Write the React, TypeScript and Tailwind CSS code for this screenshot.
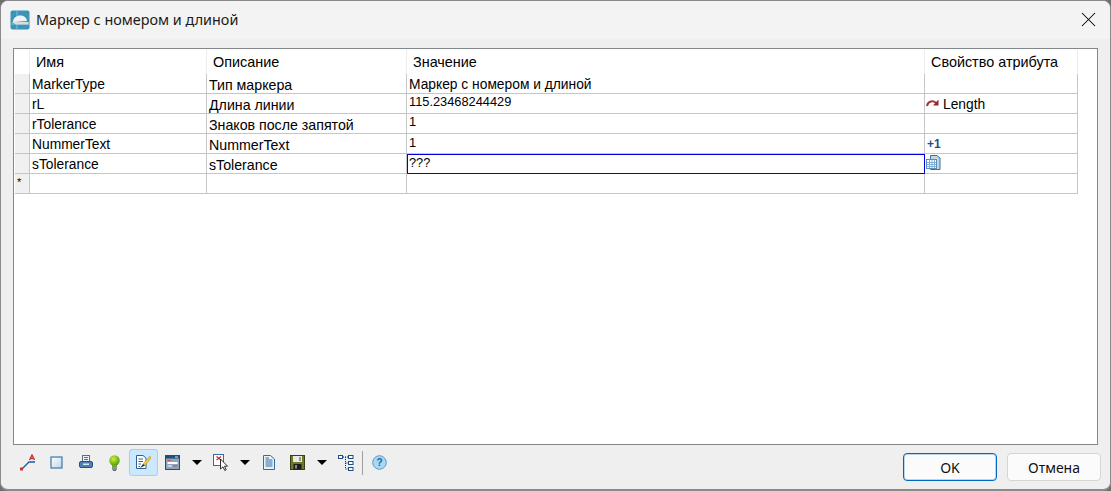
import { X } from "lucide-react";
import type { ReactNode } from "react";

const columns = "grid-cols-[15px_177px_200px_518px_153px]";
const cell = "border-r border-b border-[#c6c6c6] leading-[16px]";

const rows: { name: string; desc: string; value: string; valueClass: string; attr?: ReactNode; active?: boolean }[] = [
  { name: "MarkerType", desc: "Тип маркера", value: "Маркер с номером и длиной", valueClass: "pt-[3px] text-[13.8px]" },
  {
    name: "rL",
    desc: "Длина линии",
    value: "115.23468244429",
    valueClass: "text-[12.8px]",
    attr: (
      <span className="flex items-center gap-[3px] pl-[1px] pt-[2px]">
        <RedoIcon />
        <span>Length</span>
      </span>
    ),
  },
  { name: "rTolerance", desc: "Знаков после запятой", value: "1", valueClass: "text-[12.8px]" },
  {
    name: "NummerText",
    desc: "NummerText",
    value: "1",
    valueClass: "pt-[1px] text-[12.8px]",
    attr: <span className="pl-[2px] text-[12px] font-bold text-[#1f4e87] inline-block">+1</span>,
  },
  { name: "sTolerance", desc: "sTolerance", value: "???", valueClass: "text-[12.8px]", attr: <SheetIcon />, active: true },
];

function RedoIcon() {
  return (
    <svg width="14" height="10" viewBox="0 0 14 10" className="-translate-y-[2px]">
      <path d="M1 8 C2 3 7 2 10 5" fill="none" stroke="#a03a3a" strokeWidth="2" />
      <path d="M12.5 1.5 V7.5 H7 Z" fill="#8c2b2b" />
    </svg>
  );
}

function SheetIcon() {
  return (
    <svg width="15" height="15" viewBox="0 0 15 15" className="ml-[1px] -translate-y-[1px]">
      <path d="M4.5 .5 H11 L14 3 V14.5 H4.5 Z" fill="#c6d5e2" stroke="#3d6f9c" />
      <rect x=".5" y="4.5" width="10" height="9" fill="#ffffff" stroke="#5d8fbc" />
      <path d="M1 7.5 H10 M1 9.5 H10 M1 11.5 H10 M3.5 5 V13 M6 5 V13 M8.5 5 V13" stroke="#86aed4" />
    </svg>
  );
}

function LineTextIcon() {
  return (
    <svg width="18" height="18" viewBox="0 0 18 18">
      <path d="M3 15 L10 8 H16" fill="none" stroke="#1f5f9e" strokeWidth="1.4" />
      <rect x="1" y="13.5" width="3" height="3" fill="#c8343c" />
      <path d="M10.5 6 L13 1 L15.5 6 M11.5 4.5 H14.5" fill="none" stroke="#c8343c" strokeWidth="1.4" />
    </svg>
  );
}

function SquareIcon() {
  return (
    <svg width="14" height="14" viewBox="0 0 14 14">
      <defs>
        <linearGradient id="sq" x1="0" y1="0" x2="1" y2="1">
          <stop offset="0" stopColor="#ffffff" />
          <stop offset="1" stopColor="#bcd6e6" />
        </linearGradient>
      </defs>
      <rect x="1" y="1" width="11" height="11" fill="url(#sq)" stroke="#3f77ab" strokeWidth="1.2" />
    </svg>
  );
}

function PrinterIcon() {
  return (
    <svg width="14" height="15" viewBox="0 0 14 15">
      <rect x="3.5" y=".5" width="7" height="7" fill="#eef2f6" stroke="#5a6f86" />
      <path d="M5 2.5 H9 M5 4.5 H9" stroke="#5a6f86" />
      <rect x=".5" y="6.5" width="13" height="6" rx="1.5" fill="#4d7fb5" stroke="#24527f" />
      <rect x="4" y="8.5" width="6" height="1.5" fill="#d6e4f0" />
    </svg>
  );
}

function BulbIcon() {
  return (
    <svg width="11" height="16" viewBox="0 0 11 16">
      <defs>
        <radialGradient id="bulb" cx=".4" cy=".35" r=".7">
          <stop offset="0" stopColor="#d6ee30" />
          <stop offset="1" stopColor="#3f9a10" />
        </radialGradient>
      </defs>
      <circle cx="5.5" cy="5.5" r="5.2" fill="url(#bulb)" />
      <rect x="3" y="10" width="5" height="2" fill="#7da03a" />
      <rect x="3" y="12" width="5" height="3" fill="#8b9398" />
      <rect x="4" y="15" width="3" height="1" fill="#5f666b" />
    </svg>
  );
}

function EditNoteIcon() {
  return (
    <svg width="15" height="15" viewBox="0 0 15 15">
      <path d="M.5 .5 H7 L10 3 V13.5 H.5 Z" fill="#ffffff" stroke="#2f5f94" />
      <path d="M2.5 4 H7 M2.5 6.5 H7 M2.5 9 H5 M2.5 11.5 H4" stroke="#2f5f94" />
      <path d="M14 1 L7 9 L9 10.5 L15 3 Z" fill="#f0c63a" stroke="#b98f1c" strokeWidth=".5" />
      <path d="M7 9 L4 13 L9 10.5 Z" fill="#2a2a2a" />
    </svg>
  );
}

function WindowIcon() {
  return (
    <svg width="15" height="15" viewBox="0 0 15 15">
      <rect x=".5" y=".5" width="14" height="14" fill="#8aa5bd" stroke="#1f4f7f" />
      <rect x="1" y="1" width="13" height="2.5" fill="#1f4f7f" />
      <path d="M10 2 H13" stroke="#dfe8ef" />
      <path d="M2.5 5.5 H5.5" stroke="#d64848" />
      <rect x="2.5" y="7" width="10" height="2" fill="#ffffff" />
      <path d="M8 11 H12.5" stroke="#d64848" />
      <path d="M2.5 11 H7" stroke="#ffffff" />
    </svg>
  );
}

function CursorDocIcon() {
  return (
    <svg width="16" height="18" viewBox="0 0 16 18">
      <rect x=".5" y=".5" width="10" height="11" fill="#ffffff" stroke="#2f6da8" />
      <path d="M3.5 2.5 L8 6 M8 2.5 L3.5 6" stroke="#d02828" strokeWidth="1.2" />
      <path d="M7.5 5 V15 L10 12.8 L11.8 16.5 L13.2 15.8 L11.5 12.2 H14.5 Z" fill="#ffffff" stroke="#000000" strokeWidth=".8" />
    </svg>
  );
}

function DocIcon() {
  return (
    <svg width="12" height="15" viewBox="0 0 12 15">
      <path d="M.5 .5 H7.5 L11.5 4 V14.5 H.5 Z" fill="#e8f0f8" stroke="#2f6da8" />
      <path d="M2.5 5 H9.5 M2.5 7 H9.5 M2.5 9 H9.5 M2.5 11 H9.5 M2.5 3 H6" stroke="#2f6da8" />
    </svg>
  );
}

function SaveIcon() {
  return (
    <svg width="15" height="15" viewBox="0 0 15 15">
      <rect x=".5" y=".5" width="14" height="14" fill="#6f7a22" stroke="#37400f" />
      <rect x="3" y="1" width="9" height="6" fill="#e6eaec" />
      <rect x="9" y="2" width="2" height="4" fill="#8c9aa2" />
      <rect x="3.5" y="9" width="8" height="5.5" fill="#1c1c1c" />
      <rect x="5" y="10" width="2" height="3.5" fill="#8c8c8c" />
    </svg>
  );
}

function TreeIcon() {
  return (
    <svg width="16" height="18" viewBox="0 0 16 18">
      <g fill="#ffffff" stroke="#1f4f87">
        <rect x=".5" y="1.5" width="4" height="3" />
        <rect x="10.5" y="1.5" width="4.5" height="3" />
        <rect x="10.5" y="7.5" width="4.5" height="3" />
        <rect x="10.5" y="13.5" width="4.5" height="3" />
      </g>
      <path d="M5 3 H10 M7.5 3 V15 H10 M7.5 9 H10" stroke="#222222" strokeDasharray="1 1" fill="none" />
    </svg>
  );
}

function HelpIcon() {
  return (
    <svg width="15" height="15" viewBox="0 0 15 15">
      <circle cx="7.5" cy="7.5" r="6.8" fill="#a9d8f2" stroke="#5d9bc4" />
      <text x="7.5" y="11" textAnchor="middle" fontSize="10" fontWeight="700" fill="#2a5f96" fontFamily="Liberation Sans, sans-serif">?</text>
    </svg>
  );
}

function Caret() {
  return (
    <div className="w-[19px] flex justify-center">
      <span className="w-0 h-0 border-x-[5px] border-x-transparent border-t-[5px] border-t-black" />
    </div>
  );
}

function ToolButton({ children, active }: { children: ReactNode; active?: boolean }) {
  return (
    <div
      className={
        "w-[29px] h-[27px] flex items-center justify-center rounded-[3px] border " +
        (active ? "bg-[#cce8ff] border-[#99d1ff]" : "border-transparent")
      }
    >
      {children}
    </div>
  );
}

function TitleBar() {
  return (
    <div className="h-[38px] flex items-center pl-[9px] pr-[9px] bg-[#f3f3f3]">
      <svg width="20" height="20" viewBox="0 0 20 20">
        <rect x=".5" y=".5" width="19" height="19" rx="2" fill="#3c94b8" />
        <path d="M0 14 H20 M7 0 V20" stroke="#7cc2dc" />
        <path d="M3 12 C3 4 16 3 17 11 Z" fill="#f1f3f3" />
        <path d="M1.5 12 H18.5 V14.5 H6 Z" fill="#d9dddd" />
      </svg>
      <span className="ml-[6px] text-[14.4px] leading-none text-[#1a1a1a] font-['Noto_Sans','Open_Sans',sans-serif]">
        Маркер с номером и длиной
      </span>
      <X size={25} strokeWidth={1} className="ml-auto text-black -translate-y-[1px]" />
    </div>
  );
}

function ParamTable() {
  return (
    <div className="h-[397px] mx-[12px] border border-[#82878c] bg-white pl-[1px] pt-[1px] font-['Liberation_Sans',Arial,sans-serif] text-[13.8px] text-black">
      <div className={"grid w-fit h-[24px] text-[14.4px] leading-[18px] " + columns}>
        <div className="border-r border-[#ececec]" />
        <div className="pl-[6px] pt-[3px] border-r border-[#ececec]">Имя</div>
        <div className="pl-[6px] pt-[3px] border-r border-[#ececec]">Описание</div>
        <div className="pl-[6px] pt-[3px] border-r border-[#ececec]">Значение</div>
        <div className="pl-[6px] pt-[3px] border-r border-[#ececec]">Свойство атрибута</div>
      </div>
      {rows.map((r) => (
        <div key={r.name} className={"grid w-fit h-[20px] " + columns}>
          <div className={"bg-[#f0f0f0] " + cell} />
          <div className={"pl-[2px] pt-[3px] " + cell}>{r.name}</div>
          <div className={"pl-[2px] pt-[3px] text-[14.2px] " + cell}>{r.desc}</div>
          {r.active ? (
            <div className={"relative " + cell}>
              <div className={"absolute left-0 top-0 w-[518px] h-[20px] border border-[#0000e0] pl-[1px] " + r.valueClass}>
                {r.value}
              </div>
            </div>
          ) : (
            <div className={"pl-[2px] " + cell + " " + r.valueClass}>{r.value}</div>
          )}
          <div className={"flex items-center " + cell}>{r.attr}</div>
        </div>
      ))}
      <div className={"grid w-fit h-[20px] " + columns}>
        <div className={"bg-[#f0f0f0] text-[11px] pl-[2px] " + cell}>*</div>
        <div className={cell} />
        <div className={cell} />
        <div className={cell} />
        <div className={cell} />
      </div>
    </div>
  );
}

function Footer() {
  return (
    <div className="flex items-start pl-[12px] pr-[9px] pt-[2px]">
      <div className="flex items-center">
        <ToolButton><LineTextIcon /></ToolButton>
        <ToolButton><SquareIcon /></ToolButton>
        <ToolButton><PrinterIcon /></ToolButton>
        <ToolButton><BulbIcon /></ToolButton>
        <ToolButton active><EditNoteIcon /></ToolButton>
        <ToolButton><WindowIcon /></ToolButton>
        <Caret />
        <ToolButton><CursorDocIcon /></ToolButton>
        <Caret />
        <ToolButton><DocIcon /></ToolButton>
        <ToolButton><SaveIcon /></ToolButton>
        <Caret />
        <ToolButton><TreeIcon /></ToolButton>
        <div className="w-px h-[24px] bg-[#a0a0a0] mx-[2px]" />
        <ToolButton><HelpIcon /></ToolButton>
      </div>
      <div className="ml-auto mt-[4px] flex gap-[10px] font-['Noto_Sans','Open_Sans',sans-serif] text-[14px] text-[#111111]">
        <button className="w-[94px] h-[28px] rounded-[4px] bg-[#fbfbfb] border border-[#0067c0] shadow-[inset_0_0_0_1px_rgba(0,103,192,0.25)]">OK</button>
        <button className="w-[94px] h-[28px] rounded-[4px] bg-[#fbfbfb] border border-[#d5d5d5]">Отмена</button>
      </div>
    </div>
  );
}

export default function App() {
  return (
    <div className="w-[1111px] h-[491px] bg-[#6e6e6e] overflow-hidden">
      <div className="w-full h-full bg-[#efefef] border border-[#8a8a8a] border-b-[2px] rounded-[8px] overflow-hidden">
        <TitleBar />
        <div className="pt-[9px] pb-[2px]">
          <ParamTable />
        </div>
        <Footer />
      </div>
    </div>
  );
}
